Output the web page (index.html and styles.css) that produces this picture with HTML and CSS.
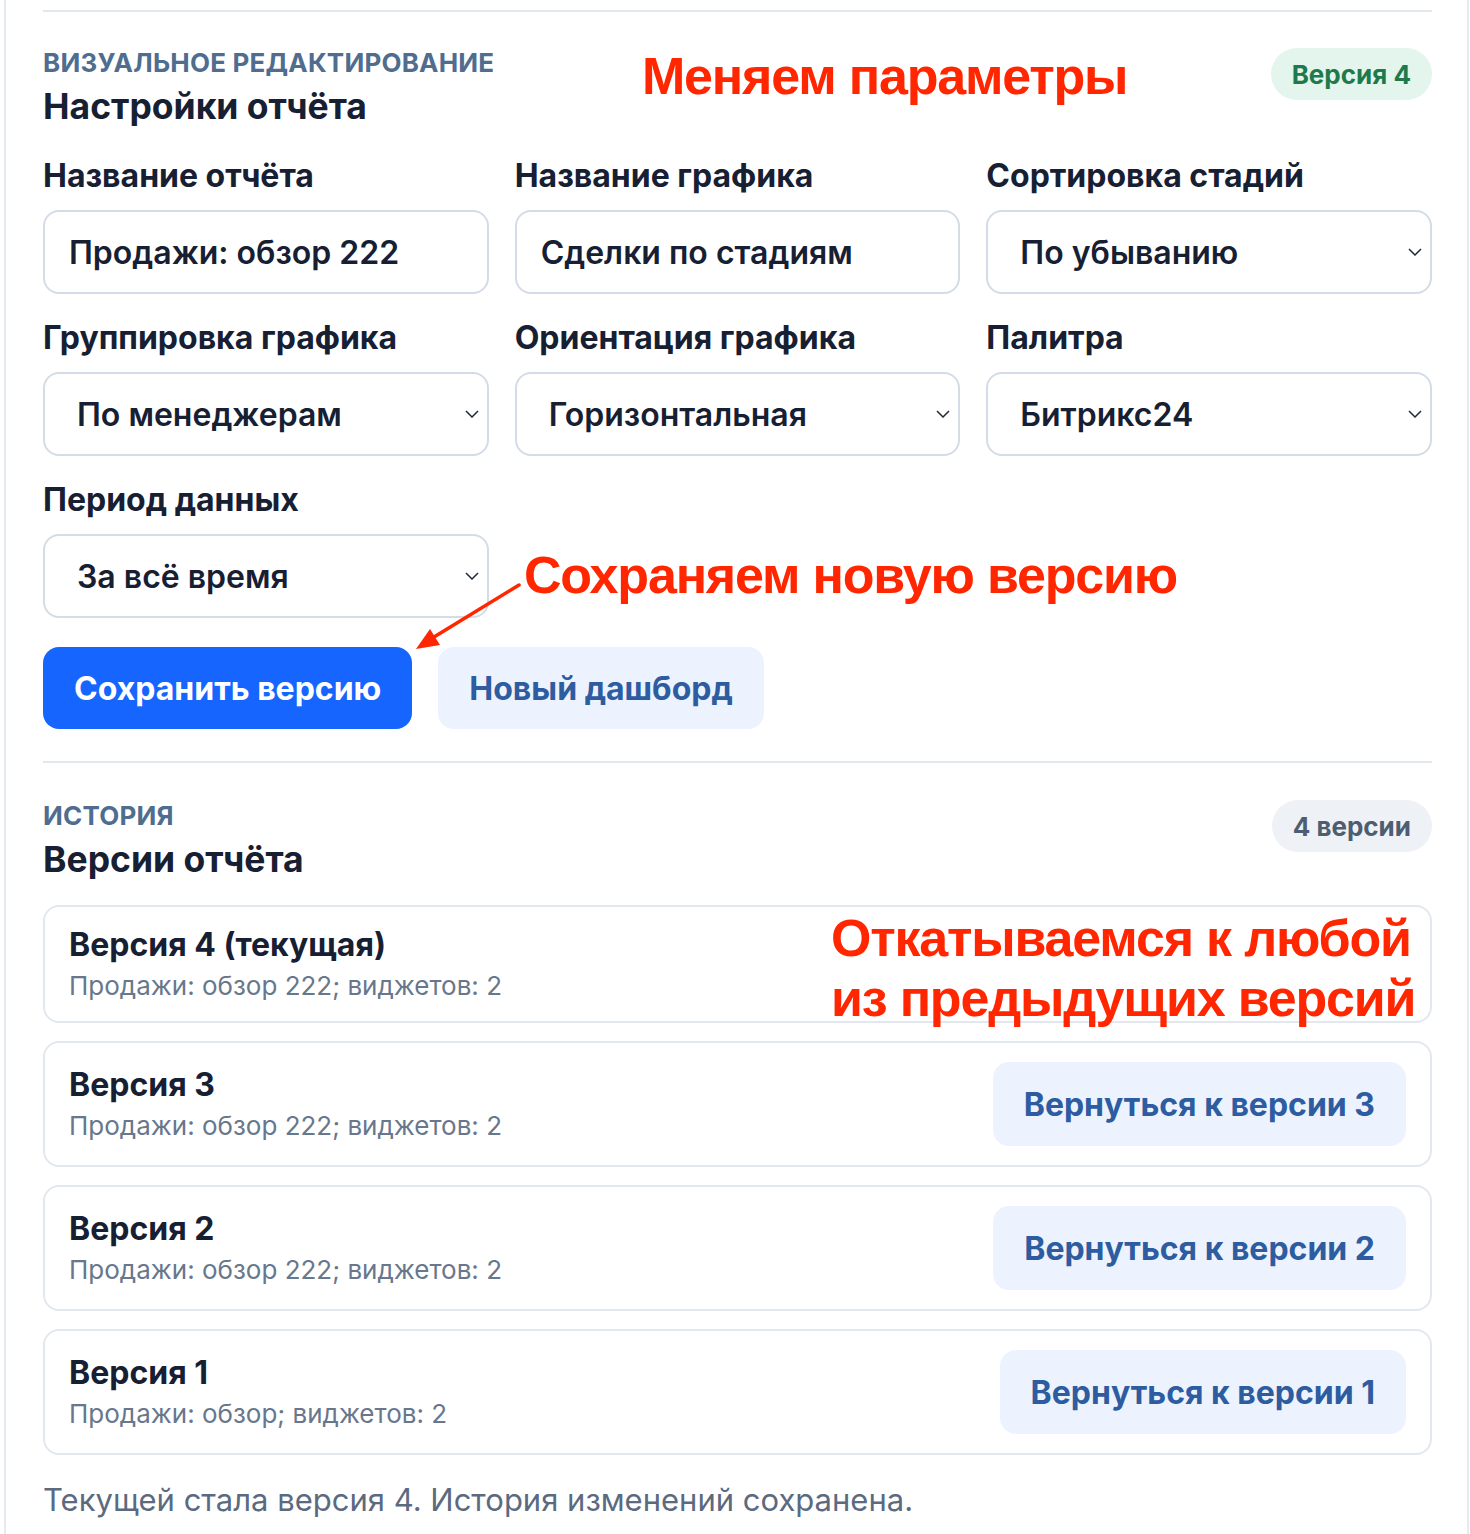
FILE: index.html
```html
<!DOCTYPE html>
<html lang="ru">
<head>
<meta charset="utf-8">
<title>Настройки отчёта</title>
<link rel="stylesheet" href="styles.css">
</head>
<body>
<div class="panel">
  <section class="section section-editor">
    <div class="section-head">
      <div>
        <div class="eyebrow">Визуальное редактирование</div>
        <h2 class="title">Настройки отчёта</h2>
      </div>
      <span class="badge badge-green">Версия 4</span>
    </div>

    <div class="fields">
      <label class="field">
        <span class="field-label">Название отчёта</span>
        <input class="control" type="text" value="Продажи: обзор 222">
      </label>
      <label class="field">
        <span class="field-label">Название графика</span>
        <input class="control" type="text" value="Сделки по стадиям">
      </label>
      <label class="field">
        <span class="field-label">Сортировка стадий</span>
        <span class="select-wrap">
          <select class="control control-select"><option>По убыванию</option></select>
          <svg class="chevron" viewBox="0 0 14 8" width="14" height="8"><polyline points="1,1 7,7 13,1" fill="none" stroke="#1f2937" stroke-width="1.5"/></svg>
        </span>
      </label>
      <label class="field">
        <span class="field-label">Группировка графика</span>
        <span class="select-wrap">
          <select class="control control-select"><option>По менеджерам</option></select>
          <svg class="chevron" viewBox="0 0 14 8" width="14" height="8"><polyline points="1,1 7,7 13,1" fill="none" stroke="#1f2937" stroke-width="1.5"/></svg>
        </span>
      </label>
      <label class="field">
        <span class="field-label">Ориентация графика</span>
        <span class="select-wrap">
          <select class="control control-select"><option>Горизонтальная</option></select>
          <svg class="chevron" viewBox="0 0 14 8" width="14" height="8"><polyline points="1,1 7,7 13,1" fill="none" stroke="#1f2937" stroke-width="1.5"/></svg>
        </span>
      </label>
      <label class="field">
        <span class="field-label">Палитра</span>
        <span class="select-wrap">
          <select class="control control-select"><option>Битрикс24</option></select>
          <svg class="chevron" viewBox="0 0 14 8" width="14" height="8"><polyline points="1,1 7,7 13,1" fill="none" stroke="#1f2937" stroke-width="1.5"/></svg>
        </span>
      </label>
      <label class="field">
        <span class="field-label">Период данных</span>
        <span class="select-wrap">
          <select class="control control-select"><option>За всё время</option></select>
          <svg class="chevron" viewBox="0 0 14 8" width="14" height="8"><polyline points="1,1 7,7 13,1" fill="none" stroke="#1f2937" stroke-width="1.5"/></svg>
        </span>
      </label>
    </div>

    <div class="actions">
      <button class="btn btn-primary" type="button">Сохранить версию</button>
      <button class="btn btn-secondary" type="button">Новый дашборд</button>
    </div>
  </section>

  <section class="section section-history">
    <div class="section-head">
      <div>
        <div class="eyebrow">История</div>
        <h2 class="title">Версии отчёта</h2>
      </div>
      <span class="badge badge-gray">4 версии</span>
    </div>

    <div class="version-list">
      <div class="version">
        <div>
          <div class="version-title">Версия 4 (текущая)</div>
          <div class="version-meta">Продажи: обзор 222; виджетов: 2</div>
        </div>
      </div>
      <div class="version">
        <div>
          <div class="version-title">Версия 3</div>
          <div class="version-meta">Продажи: обзор 222; виджетов: 2</div>
        </div>
        <button class="btn btn-secondary btn-revert" type="button">Вернуться к версии 3</button>
      </div>
      <div class="version">
        <div>
          <div class="version-title">Версия 2</div>
          <div class="version-meta">Продажи: обзор 222; виджетов: 2</div>
        </div>
        <button class="btn btn-secondary btn-revert" type="button">Вернуться к версии 2</button>
      </div>
      <div class="version">
        <div>
          <div class="version-title">Версия 1</div>
          <div class="version-meta">Продажи: обзор; виджетов: 2</div>
        </div>
        <button class="btn btn-secondary btn-revert" type="button">Вернуться к версии 1</button>
      </div>
    </div>

    <p class="footer-note">Текущей стала версия 4. История изменений сохранена.</p>
  </section>

  <div class="note note-params">Меняем параметры</div>
  <div class="note note-save">Сохраняем новую версию</div>
  <div class="note note-rollback">Откатываемся к любой<br>из предыдущих версий</div>
  <svg class="note-arrow" viewBox="0 0 120 80" width="120" height="80">
    <line x1="112" y1="10" x2="27" y2="62" stroke="#ff2600" stroke-width="3.5" stroke-linecap="round"/>
    <polygon points="9,74 33,70 23,54" fill="#ff2600"/>
  </svg>
</div>
</body>
</html>
```

FILE: styles.css
```css
* { box-sizing: border-box; }

body {
  margin: 0;
  background: #ffffff;
  color: #172033;
  font-family: Inter, "Noto Sans", "Liberation Sans", sans-serif;
}

.panel {
  position: relative;
  margin: 0 1px 0 4px;
  border-left: 2px solid #e6ebf1;
  border-right: 2px solid #e6ebf1;
  padding: 10px 35px 20px 37px;
  min-height: 1534px;
}

.section {
  border-top: 2px solid #e3e8ef;
  padding-top: 35px;
}

.section-editor { padding-bottom: 32px; }
.section-history { padding-top: 37px; }

.section-head {
  display: flex;
  justify-content: space-between;
  align-items: flex-start;
}

.eyebrow {
  font-size: 26px;
  line-height: 32px;
  font-weight: 700;
  letter-spacing: 0.2px;
  text-transform: uppercase;
  color: #4f6d8f;
}

.title {
  margin: 7px 0 0;
  font-size: 35.5px;
  line-height: 42px;
  font-weight: 700;
  color: #172033;
}

.badge {
  margin-top: 1px;
  height: 52px;
  padding: 0 21px;
  border-radius: 26px;
  display: inline-flex;
  align-items: center;
  font-size: 26px;
  font-weight: 700;
}

.section-history .badge { margin-top: 0; }

.badge-green { background: #e3f5ec; color: #1d7a4c; }
.badge-gray { background: #eef1f5; color: #4d5d72; }

.fields {
  margin-top: 30px;
  display: grid;
  grid-template-columns: repeat(3, 1fr);
  column-gap: 26px;
  row-gap: 26px;
}

.field {
  display: flex;
  flex-direction: column;
  gap: 16px;
}

.field-label {
  font-size: 32px;
  line-height: 36px;
  font-weight: 700;
  color: #172033;
}

.control {
  width: 100%;
  height: 84px;
  border: 2px solid #d3dce7;
  border-radius: 16px;
  padding: 0 24px;
  background: #ffffff;
  color: #172033;
  font-family: Inter, "Noto Sans", sans-serif;
  font-size: 32px;
  font-weight: 600;
  outline: none;
}

.select-wrap {
  position: relative;
  display: block;
}

.control-select {
  appearance: none;
  -webkit-appearance: none;
  padding-left: 32px;
}

.chevron {
  position: absolute;
  right: 10px;
  top: 38px;
  pointer-events: none;
}

.actions {
  margin-top: 29px;
  display: flex;
  gap: 26px;
}

.btn {
  height: 82px;
  padding: 0 31px;
  border: none;
  border-radius: 16px;
  font-family: Inter, "Noto Sans", sans-serif;
  font-size: 32px;
  font-weight: 700;
  cursor: pointer;
}

.btn-primary { background: #1765ff; color: #ffffff; }
.btn-secondary { background: #ecf2fe; color: #2d5ca0; }

.version-list {
  margin-top: 24px;
  display: flex;
  flex-direction: column;
  gap: 18px;
}

.version {
  border: 2px solid #e3e8ef;
  border-radius: 16px;
  padding: 19px 24px;
  display: flex;
  justify-content: space-between;
  align-items: center;
}

.version-title {
  font-size: 32px;
  line-height: 38px;
  font-weight: 700;
  color: #172033;
}

.version-meta {
  margin-top: 6px;
  font-size: 26px;
  line-height: 32px;
  color: #68778c;
}

.btn-revert {
  height: 84px;
  padding: 0 31px;
}

.footer-note {
  margin: 27px 0 0;
  font-size: 31px;
  line-height: 36px;
  color: #5b6a7f;
}

.note {
  position: absolute;
  font-family: "Liberation Sans", Arial, sans-serif;
  font-weight: 700;
  font-size: 52px;
  line-height: 60px;
  letter-spacing: -1.2px;
  color: #ff2600;
  white-space: nowrap;
}

.note-params { left: 636px; top: 46px; }
.note-save { left: 518px; top: 545px; }
.note-rollback { left: 825px; top: 908px; }

.note-arrow {
  position: absolute;
  left: 401px;
  top: 575px;
}
```
